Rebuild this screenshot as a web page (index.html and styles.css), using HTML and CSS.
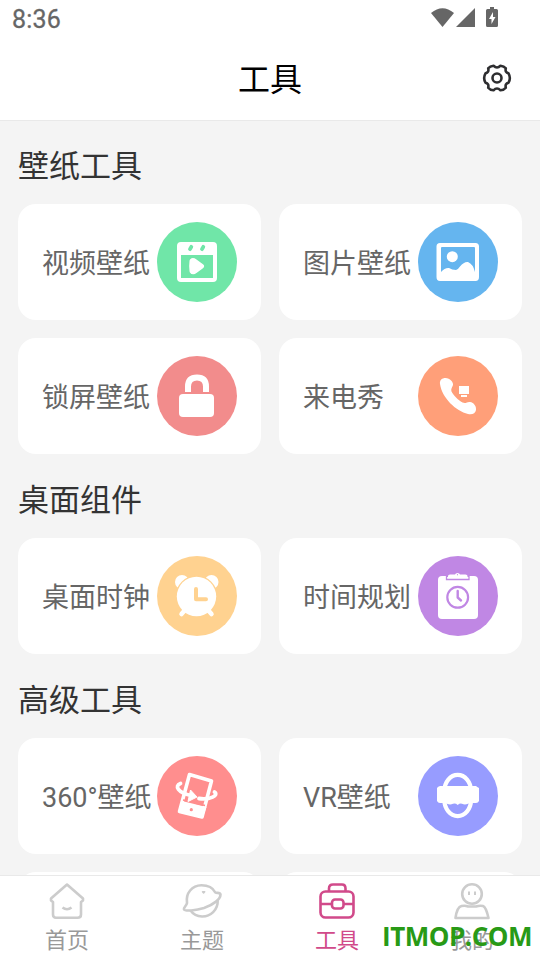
FILE: index.html
```html
<!DOCTYPE html>
<html lang="zh-CN">
<head>
<meta charset="utf-8">
<meta name="viewport" content="width=device-width, initial-scale=1">
<title>工具</title>
<link rel="stylesheet" href="styles.css">
</head>
<body>
<div class="app">
  <div class="status">
    <span class="time">8:36</span>
    <svg class="status-icons" width="70" height="22" viewBox="0 0 70 22" fill="#666">
      <path d="M1 6Q12.500 -3.500 24 6L12.500 20Z"/>
      <path d="M45 1V20H26Z"/>
      <path d="M60 0h4v2h2.500q1.500 0 1.500 1.500v15q0 1.500-1.500 1.500h-9q-1.500 0-1.500-1.500v-15q0-1.500 1.500-1.500H60Z"/>
      <path fill="#fff" d="M63 5 59 12h2.500v5L65.500 10H63Z"/>
    </svg>
  </div>
  <header class="header">
    <h1>工具</h1>
    <svg class="gear" width="30" height="30" viewBox="0 0 30 30" fill="none" stroke="#2e2e30" stroke-width="2.600" stroke-linejoin="round">
      <path d="M26.500 10.300Q29.200 15 26.500 19.700Q22.800 20.500 23.800 24.700Q22 27 18.500 27.300Q15 23.600 11.500 27.300Q8 27 6.200 24.700Q7.200 20.500 3.500 19.700Q.8 15 3.500 10.300Q7.200 9.500 6.200 5.300Q8 3 11.500 2.700Q15 6.400 18.500 2.700Q22 3 23.800 5.300Q22.800 9.500 26.500 10.300Z"/>
      <circle cx="15" cy="15" r="4.500"/>
    </svg>
  </header>

  <main class="content">
    <h2>壁纸工具</h2>
    <div class="grid">
      <div class="card"><span>视频壁纸</span>
        <svg class="icon green" viewBox="0 0 80 80">
          <path fill="#fff" fill-rule="evenodd" d="M24 20H56Q60 20 60 24V56Q60 60 56 60H24Q20 60 20 56V24Q20 20 24 20ZM24 33V56H56V33Z"/>
          <path stroke="#70e6a8" stroke-width="3.800" stroke-linecap="round" d="M34.300 24.800 33 27.200M46.300 24.800 45 27.200"/>
          <path fill="#fff" stroke="#fff" stroke-width="5" stroke-linejoin="round" d="M35 39Q36 38 38 39.500L44.500 44.300 38 49Q36 50.500 35 49Q34.300 44 35 39Z"/>
        </svg></div>
      <div class="card"><span>图片壁纸</span>
        <svg class="icon blue" viewBox="0 0 80 80">
          <path fill="#fff" fill-rule="evenodd" d="M22 21H57.500Q61 21 61 24.500V55Q61 59 57.500 59H22Q18.500 59 18.500 55V24.500Q18.500 21 22 21ZM24 25Q23 25 23 26V50Q27 45.500 31 46Q34 48 38 48Q40 47.500 42 44.500Q46 39.500 50 40Q55 42 57 50V26Q57 25 56 25Z"/>
          <circle cx="34.300" cy="34.700" r="5.500" fill="#fff"/>
        </svg></div>
      <div class="card"><span>锁屏壁纸</span>
        <svg class="icon rose" viewBox="0 0 80 80">
          <path fill="none" stroke="#fff" stroke-width="6" d="M31 36V30.500Q31 21.500 40 21.500T49 30.500V36"/>
          <rect x="22" y="38" width="35" height="23" rx="4" fill="#fff"/>
        </svg></div>
      <div class="card"><span>来电秀</span>
        <svg class="icon orange" viewBox="0 0 80 80">
          <path fill="#fff" d="M22 28C21.500 24 24 22 27.500 22C32 22 35.500 26 35 29C34.500 31 32.500 33 33.500 35.500C35.500 39.500 40 44 44.500 46.500C48 48 49 45.500 52 46C56 46.500 58.500 50.500 58 54C57.500 57.500 54 59 50 58C38 55 24 42 22 28Z"/>
          <path fill="#fff" d="M41 30H51V38H41ZM43 39H49V41H43Z"/>
        </svg></div>
    </div>

    <h2>桌面组件</h2>
    <div class="grid">
      <div class="card"><span>桌面时钟</span>
        <svg class="icon yellow" viewBox="0 0 80 80">
          <g fill="#fff">
            <circle cx="25" cy="26" r="7"/><circle cx="54.500" cy="26" r="7"/>
          </g>
          <circle cx="39.500" cy="40.500" r="21" fill="#ffd290"/>
          <circle cx="39.500" cy="40.500" r="19.700" fill="#fff"/>
          <path stroke="#fff" stroke-width="4.500" stroke-linecap="round" d="M28 54 24.500 58M51 54 54.500 58"/>
          <path fill="none" stroke="#ffd290" stroke-width="4" stroke-linecap="round" stroke-linejoin="round" d="M39 33V43.300H49"/>
        </svg></div>
      <div class="card"><span>时间规划</span>
        <svg class="icon purple" viewBox="0 0 80 80">
          <rect x="20" y="20" width="40" height="43" rx="4" fill="#fff"/>
          <path fill="none" stroke="#c087e4" stroke-width="1.300" d="M28.500 19V23.500H51V19"/>
          <path fill="#c087e4" d="M28.500 19H51V21H28.500Z"/>
          <path fill="#fff" d="M30 22V20Q30 18.500 32 18.500H37Q37.500 17 39.500 17T42 18.500H47.500Q49.500 18.500 49.500 20V22Z"/>
          <circle cx="39.500" cy="18.700" r=".6" fill="#c087e4"/>
          <circle cx="39.700" cy="41.300" r="10.400" fill="none" stroke="#c087e4" stroke-width="2.200"/>
          <path fill="none" stroke="#c087e4" stroke-width="2.400" stroke-linecap="round" stroke-linejoin="round" d="M39.700 35V41.500L43 44.500"/>
        </svg></div>
    </div>

    <h2>高级工具</h2>
    <div class="grid">
      <div class="card"><span>360°壁纸</span>
        <svg class="icon red" viewBox="0 0 80 80">
          <path fill="none" stroke="#fff" stroke-width="3.600" stroke-linejoin="round" d="M32.500 18.500 54.500 25 45 61 22.500 55.500Z"/>
          <path fill="#fff" d="M25 45 49.500 51 45.500 62 22 56Z"/>
          <path stroke="#ff8e8e" stroke-width="1.700" d="M26 44 33 45.500M38 47 48 49.500"/>
          <path fill="none" stroke="#fff" stroke-width="3.800" stroke-linecap="round" d="M23.500 27.500C17 30 21 36.500 34 39.500M42 42.500C53 44 62 39.500 57.500 36"/>
          <path fill="#fff" stroke="#fff" stroke-linejoin="round" d="M33.500 34 40 41 31 45.500Z"/>
          <circle cx="34.300" cy="53.700" r="1.600" fill="#ff8e8e"/>
        </svg></div>
      <div class="card"><span>VR壁纸</span>
        <svg class="icon indigo" viewBox="0 0 80 80">
          <rect x="26.400" y="18.900" width="26.600" height="41.200" rx="13.300" ry="16" fill="none" stroke="#fff" stroke-width="4.200"/>
          <path fill="#fff" d="M22 30H58Q59 31 61 32V45Q60 47 58 47H53Q51 47 50 47.700Q47 49 44 47.800Q42 47 39.700 49Q37.500 47 35 47.800Q32 49 29 47.700Q28 47 27 47H22Q20 47 19 45V32Q20 30.500 22 30Z"/>
        </svg></div>
      <div class="card"></div>
      <div class="card"></div>
    </div>
  </main>

  <nav class="tabs">
    <div class="tab">
      <svg viewBox="0 0 40 40"><path d="M20 3.500 36 17.500V19.500L34 21V33.500Q34 36.800 30.500 36.800H9Q6 36.800 6 33.500V21L4 19.500V17.500Z"/><path d="M15.500 26.500Q20 30 24.500 26.500"/></svg>
      <span>首页</span>
    </div>
    <div class="tab">
      <svg viewBox="0 0 40 40"><path d="M5 22C3.500 12 10 4.500 19.500 4.300C26 4.300 31 7 33.300 11.500C35 12.500 38 11 38.500 13.500C38.500 18 32 23.500 22 27C14 29.500 3 30.500 2 28.500C1.500 26 4.500 25 5 22Z"/><path d="M35.700 19.500C36 29 28.500 35.700 20 35.500C15 35.300 11 33 8.500 29.500"/><path stroke-width="1.500" d="M20.500 10.700H22.700L21.600 12Z"/></svg>
      <span>主题</span>
    </div>
    <div class="tab active">
      <svg viewBox="0 0 40 40"><rect x="3.500" y="10.500" width="33" height="26" rx="5"/><path d="M12 10V7.500Q12 3.500 16 3.500H25Q28.500 3.500 28.500 7.500V10M3.500 23H14M27 23H36.500"/><rect x="15" y="18.500" width="11.500" height="9" rx="3"/></svg>
      <span>工具</span>
    </div>
    <div class="tab">
      <svg viewBox="0 0 40 40"><circle cx="20" cy="13" r="9.800"/><path stroke-width="2" d="M17 10.500V14M23 10.500V14"/><path d="M9.500 25C12 24.500 14 24.500 16 25.500H24C27 24.500 29 24.500 31 25Q34 26 36.500 37H3.500Q5 26 9.500 25Z"/></svg>
      <span>我的</span>
    </div>
  </nav>
  <div class="watermark">ITMOP.COM</div>
</div>
</body>
</html>
```
FILE: styles.css
```css
* { box-sizing: border-box; }

body {
  margin: 0;
  background: #fff;
  font-family: Roboto, "Noto Sans CJK SC", sans-serif;
}

.app {
  position: relative;
  display: flex;
  flex-direction: column;
  height: 960px;
  overflow: hidden;
}

.status {
  display: flex;
  justify-content: space-between;
  height: 40px;
  padding: 7px 40px 0 12px;
}

.time {
  font-size: 25px;
  font-weight: 400;
  line-height: 26px;
  letter-spacing: 0.2px;
  -webkit-text-stroke: 0.3px #666;
  color: #666;
}

.header {
  display: grid;
  grid-template-columns: 1fr auto 1fr;
  align-items: center;
  height: 80px;
  padding: 0 28px;
}

h1, h2 { margin: 0; font-weight: 400; }

h1 {
  grid-column: 2;
  font-size: 32px;
  line-height: 80px;
  color: #000;
}

.gear { justify-self: end; margin-top: -4px; }

.content {
  flex: 1;
  min-height: 0;
  overflow: hidden;
  padding: 0 18px;
  background: #f4f4f4;
  border-top: 1px solid #e9e9e9;
}

h2 {
  height: 84px;
  padding-top: 5px;
  font-size: 31px;
  line-height: 84px;
  color: #333;
}

h2:first-child { margin-top: -1px; }

.grid {
  display: grid;
  grid-template-columns: 1fr 1fr;
  gap: 18px;
}

.card {
  display: flex;
  align-items: center;
  justify-content: space-between;
  height: 116px;
  padding: 0 24px;
  border-radius: 18px;
  background: #fff;
  font-size: 27px;
  color: #666;
  white-space: nowrap;
}

.card span { padding-bottom: 2px; }

.icon {
  flex: none;
  width: 80px;
  height: 80px;
  border-radius: 50%;
}

.green { background: #70e6a8; }
.blue { background: #65b5ef; }
.rose { background: #f28c8c; }
.orange { background: #ff9f79; }
.yellow { background: #ffd290; }
.purple { background: #c087e4; }
.red { background: #ff8e8e; }
.indigo { background: #979cff; }

.tabs {
  display: grid;
  grid-template-columns: repeat(4, 1fr);
  height: 85px;
  border-top: 1px solid #e9e9e9;
  background: #fff;
}

.tab {
  display: flex;
  flex-direction: column;
  align-items: center;
  padding: 5px 2px 0 0;
  font-size: 22px;
  line-height: 30px;
  color: #999;
}

.tab svg {
  width: 40px;
  height: 40px;
  margin-bottom: 5px;
  fill: none;
  stroke: #ccc;
  stroke-width: 2.6;
  stroke-linejoin: round;
}

.tab span { padding-left: 1px; }

.active { color: #d14a8a; }
.active svg { stroke: #d14a8a; }

.watermark {
  position: absolute;
  top: 919px;
  right: 8px;
  font: 700 26px/34px "Open Sans", sans-serif;
  letter-spacing: -0.5px;
  color: #289a16;
}
```
